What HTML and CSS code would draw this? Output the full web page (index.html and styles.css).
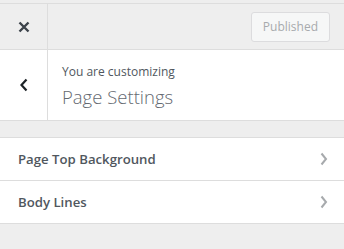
FILE: index.html
```html
<!DOCTYPE html>
<html lang="en">
<head>
  <meta charset="UTF-8">
  <title>Customizer - Page Settings</title>
  <meta name="viewport" content="width=device-width, initial-scale=1.0">
  <link rel="stylesheet" href="styles.css">
</head>
<body>
  <div class="sidebar">
    <div class="header">
      <button class="close" aria-label="Close">
        <svg width="12" height="12" viewBox="0 0 12 12"><path d="M1.5 1.5 L10.5 10.5 M10.5 1.5 L1.5 10.5" stroke="#3c434a" stroke-width="2.4" fill="none"/></svg>
      </button>
      <div class="actions">
        <button class="publish" disabled>Published</button>
      </div>
    </div>

    <div class="info">
      <button class="back" aria-label="Back">
        <svg width="10" height="14" viewBox="0 0 10 14"><path d="M7.5 1.5 L2.5 7 L7.5 12.5" stroke="#1d2327" stroke-width="2.2" fill="none"/></svg>
      </button>
      <div class="title">
        <span class="action">You are customizing</span>
        <h3>Page Settings</h3>
      </div>
    </div>

    <ul class="sections">
      <li class="section">
        <span>Page Top Background</span>
        <svg width="8" height="14" viewBox="0 0 8 14"><path d="M1.5 1.5 L6 7 L1.5 12.5" stroke="#a7aaad" stroke-width="2" fill="none"/></svg>
      </li>
      <li class="section">
        <span>Body Lines</span>
        <svg width="8" height="14" viewBox="0 0 8 14"><path d="M1.5 1.5 L6 7 L1.5 12.5" stroke="#a7aaad" stroke-width="2" fill="none"/></svg>
      </li>
    </ul>
  </div>
</body>
</html>
```

FILE: styles.css
```css
body {
  margin: 0;
  padding-top: 3px;
  background: #eeeeee;
  font-family: 'Open Sans', 'Noto Sans', sans-serif;
  color: #50575e;
}

.sidebar {
  border-top: 1px solid #dddddd;
}

.header {
  display: flex;
  height: 45px;
  border-bottom: 1px solid #dddddd;
  background: #eeeeee;
}

.close,
.back {
  width: 48px;
  border: none;
  border-right: 1px solid #dddddd;
  background: transparent;
  padding: 0;
  display: flex;
  align-items: center;
  justify-content: center;
}

.actions {
  flex: 1;
  display: flex;
  align-items: center;
  justify-content: flex-end;
  padding-right: 14px;
}

.publish {
  height: 30px;
  padding: 0 11px;
  border: 1px solid #dcdcde;
  border-radius: 3px;
  background: #f6f7f7;
  color: #a7aaad;
  font-family: inherit;
  font-size: 12px;
}

.info {
  display: flex;
  height: 70px;
  background: #ffffff;
  border-bottom: 1px solid #dddddd;
}

.title {
  padding: 13px 0 0 14px;
}

.action {
  display: block;
  font-size: 12px;
  color: #50575e;
  line-height: 18px;
}

.title h3 {
  margin: 2px 0 0;
  font-size: 18.5px;
  font-weight: 300;
  color: #646970;
  line-height: 28px;
}

.sections {
  list-style: none;
  margin: 16px 0 0;
  padding: 0;
  border-top: 1px solid #dddddd;
}

.section {
  display: flex;
  align-items: center;
  justify-content: space-between;
  height: 42px;
  padding: 0 16px 0 18px;
  background: #ffffff;
  border-bottom: 1px solid #dddddd;
  font-size: 13.2px;
  font-weight: 600;
  color: #50575e;
}
```
